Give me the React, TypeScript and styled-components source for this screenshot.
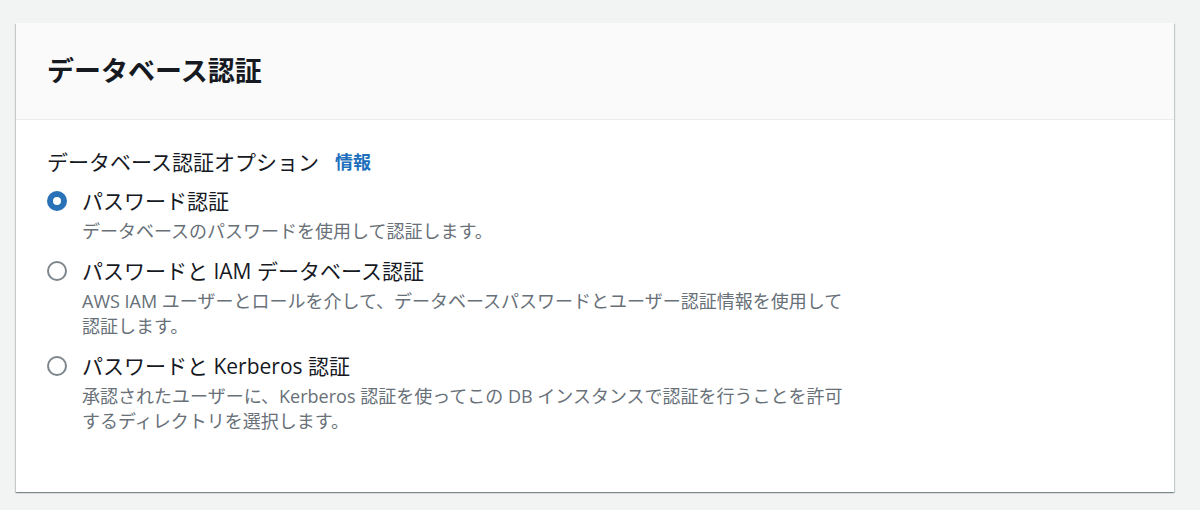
import React, { useState } from 'react'
import styled, { createGlobalStyle } from 'styled-components'

const GlobalStyle = createGlobalStyle`
    body{
        margin:0;
        background:#f2f3f3;
        font-family:"Open Sans","Noto Sans CJK JP",sans-serif;
        color:#16191f;
    }
`

type Option = {
    id:string,
    label:string,
    description:string,
}

const options:Option[] = [
    {
        id:'password',
        label:'パスワード認証',
        description:'データベースのパスワードを使用して認証します。',
    },
    {
        id:'iam',
        label:'パスワードと IAM データベース認証',
        description:'AWS IAM ユーザーとロールを介して、データベースパスワードとユーザー認証情報を使用して認証します。',
    },
    {
        id:'kerberos',
        label:'パスワードと Kerberos 認証',
        description:'承認されたユーザーに、Kerberos 認証を使ってこの DB インスタンスで認証を行うことを許可するディレクトリを選択します。',
    },
]

const App:React.FC = ()=>{
    const [selected,setSelected] = useState<string>('password')
    return (
        <Page>
            <GlobalStyle/>
            <Card>
                <Header>
                    <Title>データベース認証</Title>
                </Header>
                <Body>
                    <FieldLabel>
                        データベース認証オプション
                        <InfoLink href="#">情報</InfoLink>
                    </FieldLabel>
                    <Options>
                        {options.map(o=>(
                            <OptionRow key={o.id} onClick={()=>setSelected(o.id)}>
                                <Radio checked={selected===o.id}/>
                                <OptionText>
                                    <OptionLabel>{o.label}</OptionLabel>
                                    <OptionDesc>{o.description}</OptionDesc>
                                </OptionText>
                            </OptionRow>
                        ))}
                    </Options>
                </Body>
            </Card>
        </Page>
    )
}

const Page = styled.div`
    padding:23px 26px 18px 16px;
`

const Card = styled.section`
    background:white;
    height:469px;
    box-sizing:border-box;
    box-shadow:0 1px 1px 0 rgba(0,28,36,0.3),
                1px 1px 1px 0 rgba(0,28,36,0.15),
                -1px 1px 1px 0 rgba(0,28,36,0.15);
`

const Header = styled.header`
    background:#fafafa;
    height:97px;
    box-sizing:border-box;
    border-bottom:1px solid #eaeded;
    padding:0 31px;
    display:flex;
    align-items:center;
`

const Title = styled.h2`
    margin:0;
    font-size:27px;
    font-weight:700;
    line-height:36px;
    color:#16191f;
`

const Body = styled.div`
    padding:27px 31px 0;
`

const FieldLabel = styled.div`
    font-size:21px;
    line-height:30px;
    display:flex;
    align-items:center;
`

const InfoLink = styled.a`
    margin-left:16px;
    font-size:18px;
    font-weight:700;
    color:#1d6fbd;
    text-decoration:none;
`

const Options = styled.div`
    display:flex;
    flex-direction:column;
    gap:12px;
    margin-top:9px;
`

const OptionRow = styled.label`
    display:flex;
    align-items:flex-start;
    gap:15px;
    cursor:pointer;
`

const Radio = styled.span<{checked:boolean}>`
    flex:none;
    width:20px;
    height:20px;
    margin-top:5px;
    box-sizing:border-box;
    border-radius:50%;
    border:${p=>p.checked ? '6.5px solid #2a72b8' : '2px solid #7d868c'};
    background:white;
`

const OptionText = styled.div`
    display:flex;
    flex-direction:column;
    gap:3px;
`

const OptionLabel = styled.span`
    font-size:21px;
    line-height:30px;
    color:#16191f;
`

const OptionDesc = styled.span`
    font-size:18px;
    line-height:25px;
    color:#687078;
    max-width:775px;
`

export default App
